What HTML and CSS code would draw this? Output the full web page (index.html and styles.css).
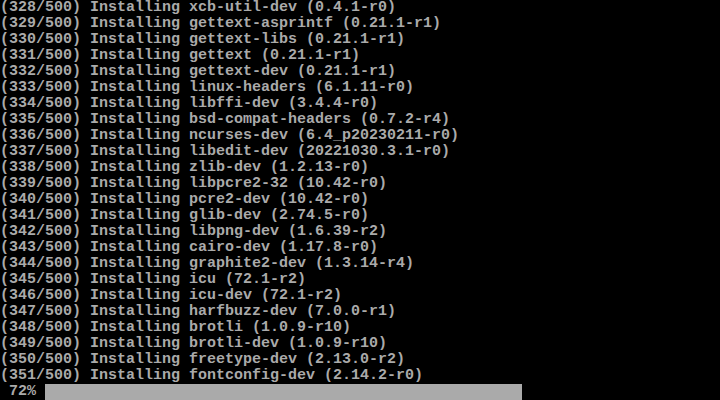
FILE: index.html
```html
<!DOCTYPE html>
<html>
<head>
<meta charset="utf-8">
<link rel="stylesheet" href="styles.css">
</head>
<body>
<div class="term">
<div class="line">(328/500) Installing xcb-util-dev (0.4.1-r0)</div>
<div class="line">(329/500) Installing gettext-asprintf (0.21.1-r1)</div>
<div class="line">(330/500) Installing gettext-libs (0.21.1-r1)</div>
<div class="line">(331/500) Installing gettext (0.21.1-r1)</div>
<div class="line">(332/500) Installing gettext-dev (0.21.1-r1)</div>
<div class="line">(333/500) Installing linux-headers (6.1.11-r0)</div>
<div class="line">(334/500) Installing libffi-dev (3.4.4-r0)</div>
<div class="line">(335/500) Installing bsd-compat-headers (0.7.2-r4)</div>
<div class="line">(336/500) Installing ncurses-dev (6.4_p20230211-r0)</div>
<div class="line">(337/500) Installing libedit-dev (20221030.3.1-r0)</div>
<div class="line">(338/500) Installing zlib-dev (1.2.13-r0)</div>
<div class="line">(339/500) Installing libpcre2-32 (10.42-r0)</div>
<div class="line">(340/500) Installing pcre2-dev (10.42-r0)</div>
<div class="line">(341/500) Installing glib-dev (2.74.5-r0)</div>
<div class="line">(342/500) Installing libpng-dev (1.6.39-r2)</div>
<div class="line">(343/500) Installing cairo-dev (1.17.8-r0)</div>
<div class="line">(344/500) Installing graphite2-dev (1.3.14-r4)</div>
<div class="line">(345/500) Installing icu (72.1-r2)</div>
<div class="line">(346/500) Installing icu-dev (72.1-r2)</div>
<div class="line">(347/500) Installing harfbuzz-dev (7.0.0-r1)</div>
<div class="line">(348/500) Installing brotli (1.0.9-r10)</div>
<div class="line">(349/500) Installing brotli-dev (1.0.9-r10)</div>
<div class="line">(350/500) Installing freetype-dev (2.13.0-r2)</div>
<div class="line">(351/500) Installing fontconfig-dev (2.14.2-r0)</div>
<div class="progress"><span class="pct"> 72% </span><span class="bar" style="width:477px"></span></div>
</div>
</body>
</html>
```
FILE: styles.css
```css
html, body {
  margin: 0;
  padding: 0;
  background: #000;
}
.term {
  width: 720px;
  height: 400px;
  overflow: hidden;
  font-family: "Liberation Mono", "DejaVu Sans Mono", monospace;
  font-size: 15px;
  line-height: 16px;
  color: #aaaaaa;
  font-weight: bold;
}
.line {
  height: 16px;
  white-space: pre;
}
.progress {
  display: flex;
  height: 16px;
  white-space: pre;
}
.pct {
  width: 45px;
}
.bar {
  display: block;
  height: 16px;
  background: #aaaaaa;
}
```
